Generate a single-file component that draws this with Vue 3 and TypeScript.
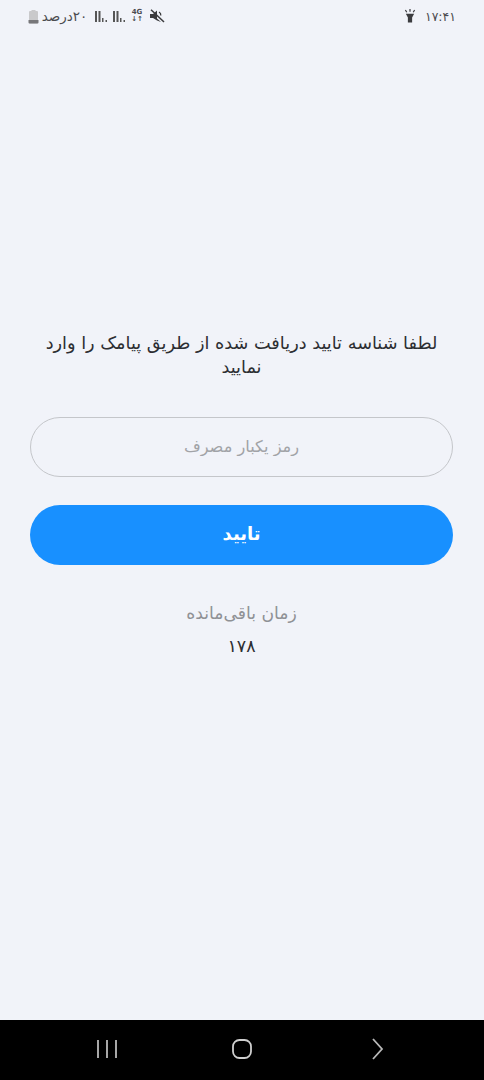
<script setup lang="ts">
const title = 'لطفا شناسه تایید دریافت شده از طریق پیامک را وارد نمایید'
const placeholder = 'رمز یکبار مصرف'
const confirmLabel = 'تایید'
const remainingLabel = 'زمان باقی‌مانده'
const remaining = '۱۷۸'
</script>

<template>
  <div class="screen">
    <header class="status">
      <div class="status-left">
        <svg class="battery" width="11" height="15" viewBox="0 0 11 15">
          <path d="M3.5 1h4v1h1.5a1 1 0 0 1 1 1v10.500a1 1 0 0 1-1 1h-7a1 1 0 0 1-1-1V3a1 1 0 0 1 1-1h1.500z" fill="#c9c9cb" />
          <path d="M.5 11h10v2.500a1 1 0 0 1-1 1h-8a1 1 0 0 1-1-1z" fill="#77777a" />
        </svg>
        <span class="status-text pct" dir="rtl">۲۰درصد</span>
        <svg class="sig" width="15" height="13" viewBox="0 0 15 13">
          <path d="M1 1h2v11H1zM4.500 1h2v11h-2zM8 8h1.500v4H8zM11.500 10H13v2h-1.500z" fill="#555" />
        </svg>
        <svg class="sig" width="15" height="13" viewBox="0 0 15 13">
          <path d="M1 1h2v11H1zM4.500 1h2v11h-2zM8 8h1.500v4H8zM11.500 10H13v2h-1.500z" fill="#555" />
        </svg>
        <span class="net">4G<br />↓↑</span>
        <svg class="mute" width="16" height="14" viewBox="0 0 16 14">
          <path d="M1 5h3l4-3.500v8L12 13l-4-1.500L4 9H1z" fill="#3b3b3e" />
          <path d="M2 .8 15 13" stroke="#3b3b3e" stroke-width="1.500" />
          <path d="M10 3c1.500.8 2 2 1.800 3.500" stroke="#3b3b3e" stroke-width="1.300" fill="none" />
        </svg>
      </div>
      <div class="status-right">
        <svg class="torch" width="12" height="14" viewBox="0 0 13 15">
          <path d="M2 5h9L8.800 9v5.500H4.200V9z" fill="#3c3c40" />
          <path d="M6.500 0v3M1.500 1l1.500 2.500M11.500 1 10 3.500" stroke="#3c3c40" stroke-width="1.300" />
        </svg>
        <span class="status-text clock">۱۷:۴۱</span>
      </div>
    </header>

    <main class="content" dir="rtl">
      <p class="title">{{ title }}</p>
      <input class="field" type="text" :placeholder="placeholder" />
      <button class="confirm" type="button">{{ confirmLabel }}</button>
      <p class="remaining-label">{{ remainingLabel }}</p>
      <p class="remaining">{{ remaining }}</p>
    </main>

    <nav class="navbar">
      <svg width="26" height="22" viewBox="0 0 26 22">
        <path d="M6 2v18M15 2v18M24 2v18" stroke="#b9b9b9" stroke-width="1.800" />
      </svg>
      <svg width="26" height="22" viewBox="0 0 26 22">
        <rect x="4" y="2" width="18" height="18" rx="6.500" fill="none" stroke="#cfcfcf" stroke-width="1.800" />
      </svg>
      <svg width="26" height="22" viewBox="0 0 26 22">
        <path d="M7 1 16 11 7 21" fill="none" stroke="#b9b9b9" stroke-width="1.800" />
      </svg>
    </nav>
  </div>
</template>

<style>
html,
body {
  margin: 0;
  background: #f1f3f9;
}
</style>

<style scoped>
.screen {
  width: 484px;
  height: 1080px;
  display: flex;
  flex-direction: column;
  background: #f1f3f9;
  font-family: "DejaVu Sans", sans-serif;
  overflow: hidden;
}

.status {
  height: 32px;
  box-sizing: border-box;
  padding: 0 28px;
  display: flex;
  justify-content: space-between;
  align-items: center;
  flex: none;
}

.status-left,
.status-right {
  display: flex;
  align-items: center;
}

.status-text {
  font-size: 12.500px;
  color: #4b4b4f;
  white-space: nowrap;
}

.pct {
  width: 49px;
  margin-left: 1px;
  font-size: 13.500px;
  text-align: center;
}

.sig {
  margin-left: 5px;
}

.sig + .sig {
  margin-left: 3px;
}

.net {
  margin-left: 3px;
  width: 14px;
  font-size: 7px;
  line-height: 7px;
  font-weight: 700;
  color: #4b4b4f;
  text-align: center;
}

.mute {
  margin-left: 5px;
}

.clock {
  margin-left: 9px;
}

.content {
  flex: 1;
  box-sizing: border-box;
  padding: 299px 31px 0 30px;
  display: flex;
  flex-direction: column;
  align-items: stretch;
}

.title {
  margin: 0;
  font-size: 17.700px;
  line-height: 24px;
  color: #2c2e32;
  text-align: center;
}

.field {
  margin-top: 38px;
  height: 60px;
  box-sizing: border-box;
  border: 1px solid #c4c6ca;
  border-radius: 30px;
  background: transparent;
  font: inherit;
  font-size: 16.200px;
  text-align: center;
  padding: 0 20px 2px;
  outline: none;
}

.field::placeholder {
  color: #a1a3a7;
  opacity: 1;
}

.confirm {
  margin-top: 28px;
  height: 60px;
  border: 0;
  border-radius: 30px;
  background: #1890ff;
  color: #fff;
  font: inherit;
  font-size: 18px;
  font-weight: 700;
  padding: 0 0 3px;
}

.remaining-label {
  margin: 36px 0 0;
  font-size: 17.200px;
  line-height: 24px;
  color: #8f9195;
  text-align: center;
}

.remaining {
  margin: 9px 0 0;
  font-size: 17.500px;
  line-height: 24px;
  color: #2c2e32;
  text-align: center;
}

.navbar {
  height: 60px;
  flex: none;
  background: #000;
  display: flex;
  align-items: center;
  justify-content: space-between;
  padding: 0 92px 2px;
  box-sizing: border-box;
}
</style>
